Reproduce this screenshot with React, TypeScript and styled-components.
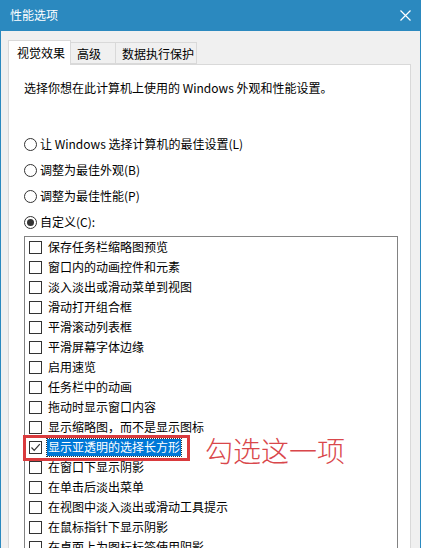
import React from 'react';
import styled, { createGlobalStyle } from 'styled-components';

const GlobalStyle = createGlobalStyle`
  html, body {
    margin: 0;
    padding: 0;
    background: #f0f0f0;
  }
  * {
    box-sizing: border-box;
  }
`;

const tabs = [
  { label: '视觉效果', width: 63 },
  { label: '高级', width: 46 },
  { label: '数据执行保护', width: 82 },
];

const presets = [
  { label: '让 Windows 选择计算机的最佳设置(L)', checked: false },
  { label: '调整为最佳外观(B)', checked: false },
  { label: '调整为最佳性能(P)', checked: false },
  { label: '自定义(C):', checked: true },
];

const effects = [
  '保存任务栏缩略图预览',
  '窗口内的动画控件和元素',
  '淡入淡出或滑动菜单到视图',
  '滑动打开组合框',
  '平滑滚动列表框',
  '平滑屏幕字体边缘',
  '启用速览',
  '任务栏中的动画',
  '拖动时显示窗口内容',
  '显示缩略图，而不是显示图标',
  '显示亚透明的选择长方形',
  '在窗口下显示阴影',
  '在单击后淡出菜单',
  '在视图中淡入淡出或滑动工具提示',
  '在鼠标指针下显示阴影',
  '在桌面上为图标标签使用阴影',
];

const CHECKED_INDEX = 10;

const App = () => {
  return (
    <>
      <GlobalStyle />
      <Window>
        <TitleBar>
          <Title>性能选项</Title>
          <CloseButton>
            <svg width="11" height="11" viewBox="0 0 11 11">
              <path d="M0.5 0.5 L10.5 10.5 M10.5 0.5 L0.5 10.5" stroke="#fff" strokeWidth="1.2" />
            </svg>
          </CloseButton>
        </TitleBar>
        <Body>
          <TabStrip>
            {tabs.map((tab, i) => (
              <Tab key={tab.label} $active={i === 0} $width={tab.width}>
                {tab.label}
              </Tab>
            ))}
          </TabStrip>
          <Panel>
            <Description>选择你想在此计算机上使用的 Windows 外观和性能设置。</Description>
            <RadioGroup>
              {presets.map((p) => (
                <RadioRow key={p.label}>
                  <Radio $checked={p.checked} />
                  <span>{p.label}</span>
                </RadioRow>
              ))}
            </RadioGroup>
            <ListBox>
              {effects.map((label, i) => {
                const checked = i === CHECKED_INDEX;
                return (
                  <ListRow key={label}>
                    <CheckBox>
                      {checked && (
                        <svg width="11" height="11" viewBox="0 0 11 11">
                          <path d="M1.5 5.5 L4.2 8.3 L9.8 2.2" fill="none" stroke="#333" strokeWidth="1.2" />
                        </svg>
                      )}
                    </CheckBox>
                    <ItemLabel $selected={checked}>{label}</ItemLabel>
                    {checked && (
                      <>
                        <Highlight />
                        <Annotation>勾选这一项</Annotation>
                      </>
                    )}
                  </ListRow>
                );
              })}
            </ListBox>
          </Panel>
        </Body>
      </Window>
    </>
  );
};

const Window = styled.div`
  width: 421px;
  height: 548px;
  overflow: hidden;
  display: flex;
  flex-direction: column;
  border-left: 1px solid #2b89bf;
  border-right: 1px solid #2b89bf;
  background: #f0f0f0;
  font-family: "Noto Sans CJK SC", "Noto Sans", sans-serif;
  font-size: 12px;
  color: #000;
`;

const TitleBar = styled.div`
  height: 31px;
  flex-shrink: 0;
  display: flex;
  align-items: center;
  justify-content: space-between;
  padding: 0 9px 0 9px;
  background: #2b89bf;
`;

const Title = styled.div`
  color: #fff;
  font-size: 12px;
  line-height: 16px;
  padding-bottom: 1px;
`;

const CloseButton = styled.div`
  width: 11px;
  height: 11px;
  display: flex;
  margin-bottom: 1px;
`;

const Body = styled.div`
  flex: 1;
  display: flex;
  flex-direction: column;
  padding: 9px 9px 0 7px;
`;

const TabStrip = styled.div`
  display: flex;
  align-items: flex-end;
  height: 24px;
`;

const Tab = styled.div<{ $active: boolean; $width: number }>`
  width: ${(p) => p.$width}px;
  height: ${(p) => (p.$active ? 25 : 22)}px;
  margin-bottom: ${(p) => (p.$active ? -1 : 0)}px;
  padding-left: ${(p) => (p.$active ? 8 : 6)}px;
  display: flex;
  align-items: center;
  line-height: 16px;
  background: ${(p) => (p.$active ? '#fff' : '#f0f0f0')};
  border: 1px solid #d9d9d9;
  border-bottom: ${(p) => (p.$active ? 'none' : '1px solid #d9d9d9')};
  margin-left: ${(p) => (p.$active ? 0 : -1)}px;
  position: relative;
  z-index: ${(p) => (p.$active ? 1 : 0)};
  padding-top: ${(p) => (p.$active ? 0 : 1)}px;
`;

const Panel = styled.div`
  flex: 1;
  background: #fff;
  border: 1px solid #d9d9d9;
  border-bottom: none;
  padding: 15px 12px 0 15px;
  display: flex;
  flex-direction: column;
`;

const Description = styled.div`
  line-height: 16px;
`;

const RadioGroup = styled.div`
  display: flex;
  flex-direction: column;
  margin-top: 35px;
`;

const RadioRow = styled.div`
  height: 26px;
  display: flex;
  align-items: center;
  gap: 3px;
  line-height: 16px;
`;

const Radio = styled.span<{ $checked: boolean }>`
  width: 13px;
  height: 13px;
  border: 1px solid #333;
  border-radius: 50%;
  display: flex;
  align-items: center;
  justify-content: center;
  flex-shrink: 0;
  &::after {
    content: '';
    display: ${(p) => (p.$checked ? 'block' : 'none')};
    width: 7px;
    height: 7px;
    border-radius: 50%;
    background: #333;
  }
`;

const ListBox = styled.div`
  margin-top: 1px;
  border: 1px solid #828282;
  border-bottom: none;
  padding: 0 0 0 4px;
  display: flex;
  flex-direction: column;
`;

const ListRow = styled.div`
  position: relative;
  height: 20px;
  flex-shrink: 0;
  display: flex;
  align-items: center;
  line-height: 16px;
`;

const CheckBox = styled.span`
  width: 13px;
  height: 13px;
  border: 1px solid #333;
  flex-shrink: 0;
  display: flex;
  align-items: center;
  justify-content: center;
  background: #fff;
`;

const ItemLabel = styled.span<{ $selected: boolean }>`
  margin-left: 5px;
  padding: 0 1px;
  height: 17px;
  display: flex;
  align-items: center;
  background: ${(p) => (p.$selected ? '#0078d7' : 'transparent')};
  color: ${(p) => (p.$selected ? '#fff' : '#000')};
  outline: ${(p) => (p.$selected ? '1px dotted #333' : 'none')};
`;

const Highlight = styled.span`
  position: absolute;
  left: -6px;
  top: -2px;
  width: 167px;
  height: 26px;
  border: 3px solid #d93a3d;
  pointer-events: none;
`;

const Annotation = styled.span`
  position: absolute;
  left: 176px;
  top: -1px;
  font-size: 28px;
  line-height: 28px;
  font-weight: 300;
  color: #d9474b;
  white-space: nowrap;
`;

export default App;
